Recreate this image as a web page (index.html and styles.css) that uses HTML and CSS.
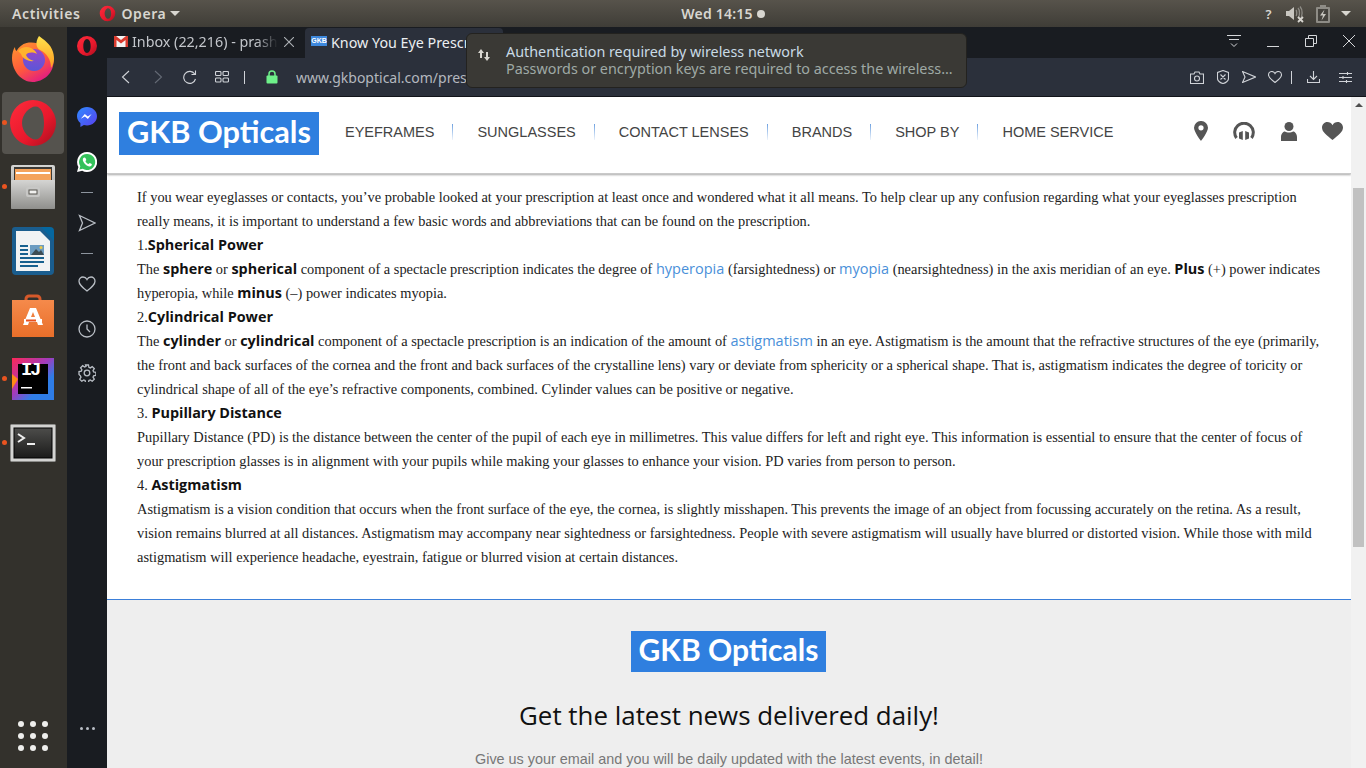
FILE: index.html
```html
<!DOCTYPE html>
<html lang="en">
<head>
  <meta charset="UTF-8">
  <title>Know You Eye Prescription</title>
  <link rel="stylesheet" href="styles.css">
</head>
<body>
  <svg class="defs" width="0" height="0">
    <defs>
      <linearGradient id="operaRed" x1="0" y1="0" x2="1" y2="1">
        <stop offset="0" stop-color="#ff2c3c"/>
        <stop offset="0.6" stop-color="#e8182c"/>
        <stop offset="1" stop-color="#a50f1e"/>
      </linearGradient>
      <linearGradient id="foxBody" x1="0" y1="0" x2="0.6" y2="1">
        <stop offset="0" stop-color="#ff9a2e"/>
        <stop offset="0.6" stop-color="#ff5a3c"/>
        <stop offset="1" stop-color="#e3207e"/>
      </linearGradient>
      <linearGradient id="foxFlame" x1="0" y1="0" x2="0" y2="1">
        <stop offset="0" stop-color="#ffe34d"/>
        <stop offset="1" stop-color="#ff9a1f"/>
      </linearGradient>
      <linearGradient id="foxCore" x1="0" y1="0" x2="0" y2="1">
        <stop offset="0" stop-color="#9a45c9"/>
        <stop offset="1" stop-color="#5a56d8"/>
      </linearGradient>
      <linearGradient id="shopBag" x1="0" y1="0" x2="0" y2="1">
        <stop offset="0" stop-color="#f58a4b"/>
        <stop offset="1" stop-color="#e96f2a"/>
      </linearGradient>
      <linearGradient id="ijBack" x1="0" y1="0" x2="1" y2="1">
        <stop offset="0" stop-color="#fe2857"/>
        <stop offset="0.45" stop-color="#a33bbd"/>
        <stop offset="0.7" stop-color="#2f7de6"/>
        <stop offset="1" stop-color="#2f7de6"/>
      </linearGradient>
      <linearGradient id="cabinet" x1="0" y1="0" x2="0" y2="1">
        <stop offset="0" stop-color="#d5d5d3"/>
        <stop offset="1" stop-color="#8f8f8c"/>
      </linearGradient>
      <linearGradient id="termGlass" x1="0" y1="0" x2="0" y2="1">
        <stop offset="0" stop-color="#4d4d4b"/>
        <stop offset="1" stop-color="#1b1b1a"/>
      </linearGradient>
      <linearGradient id="messenger" x1="0" y1="0" x2="1" y2="1">
        <stop offset="0" stop-color="#2e8bff"/>
        <stop offset="1" stop-color="#5a3ff0"/>
      </linearGradient>
    </defs>
  </svg>

  <header class="topbar">
    <div class="topbar-left">
      <span class="activities">Activities</span>
      <span class="app-menu">
        <svg class="app-menu-logo" viewBox="0 0 24 24"><path fill="url(#operaRed)" fill-rule="evenodd" d="M12 1a11 11 0 1 0 0 22 11 11 0 0 0 0-22zm1 3.500c2.600 0 4.200 3.400 4.200 7.500s-1.600 7.500-4.200 7.500S8 16 8 12s2.400-7.500 5-7.500z"/></svg>
        Opera
        <i class="caret"></i>
      </span>
    </div>
    <div class="clock">Wed 14:15 <i class="clock-dot"></i></div>
    <div class="tray">
      <span class="tray-help">?</span>
      <svg class="tray-icon" viewBox="0 0 20 18" width="20" height="18"><path fill="#c9c7c1" d="M1 6h3l5-4v13l-5-4H1z"/><path fill="none" stroke="#8e8c86" stroke-width="1.300" d="M11 5c1 1 1 5 0 6M13 3c2 2 2 8 0 10M15 1.500c2.800 3 2.800 10 0 13"/><path stroke="#d8d6d0" stroke-width="1.800" d="M13 12l5 5M18 12l-5 5"/></svg>
      <svg class="tray-icon" viewBox="0 0 14 18" width="14" height="18"><path fill="#8e8c86" d="M4 0h6v2h3a1 1 0 0 1 1 1v14a1 1 0 0 1-1 1H1a1 1 0 0 1-1-1V3a1 1 0 0 1 1-1h3z"/><path fill="#45433e" d="M2 4h10v12H2z"/><path fill="#c9c7c1" d="M8.500 4.500L4 10.500h3l-1.500 5 4.500-6.500H7z"/></svg>
      <i class="caret"></i>
    </div>
  </header>

  <div class="shell">
    <nav class="dock">
      <div class="dock-item">
        <svg viewBox="0 0 46 46" width="46" height="46">
          <path fill="url(#foxBody)" d="M2 22c0-5 1.500-9 3-11 0 2 .5 3 1.500 4 2-4 6-7 10-8 6-1 12 0 15 2 6 3 12 9 12 17 0 11-10 20-21 20S2 35 2 22z"/>
          <path fill="url(#foxFlame)" d="M29 0c4 3 12 8 14 16 2 7 1 12-2 16 0-8-4-15-11-18-4-2-5-8-1-14z"/>
          <circle cx="24" cy="24" r="11" fill="url(#foxCore)"/>
          <path fill="#ffb22e" d="M8 15c3-4 9-5 13-3 2 1 5 3 6 6-4-2-9-2-11 1 1 3 4 5 8 6-6 1-12-3-13-7-1-1-2-2-3-3z"/>
        </svg>
      </div>
      <div class="dock-item dock-active">
        <i class="run-dot"></i>
        <svg viewBox="0 0 46 46" width="46" height="46"><path fill="url(#operaRed)" fill-rule="evenodd" d="M23 0a23 23 0 1 0 0 46 23 23 0 0 0 0-46zm2.500 6.500c6 0 8.500 8 8.500 16.500s-2.500 16.500-8.500 16.500S12 31.500 12 23 19.500 6.500 25.500 6.500z"/></svg>
      </div>
      <div class="dock-item">
        <i class="run-dot"></i>
        <svg viewBox="0 0 46 46" width="46" height="46">
          <rect x="1" y="1" width="44" height="44" rx="2" fill="url(#cabinet)"/>
          <rect x="4" y="3" width="38" height="13" fill="#3c3a36"/>
          <rect x="5" y="5" width="36" height="11" fill="#f4a35c"/>
          <rect x="6" y="8" width="34" height="2" fill="#fff"/>
          <rect x="1" y="16" width="44" height="29" rx="1" fill="url(#cabinet)"/>
          <rect x="16" y="23" width="14" height="10" rx="2" fill="#c7c7c5"/>
          <rect x="19" y="26" width="8" height="4" fill="#f1f1ef" stroke="#56544f"/>
        </svg>
      </div>
      <div class="dock-item">
        <svg viewBox="0 0 42 48" width="42" height="48">
          <path fill="#1a5d8e" d="M3 0h27l12 12v32a4 4 0 0 1-4 4H4a4 4 0 0 1-4-4V3a3 3 0 0 1 3-3z"/>
          <path fill="#f1f3f4" d="M4 4h24l10 10v30H4z"/>
          <path fill="#06679f" d="M29 0h9a4 4 0 0 1 4 4v10z"/>
          <path fill="#18618f" d="M8 18h8v2H8zM8 22h8v2H8zM8 26h8v2H8zM8 30h24v2H8zM8 34h24v2H8zM8 38h18v2H8z"/>
          <rect x="18" y="18" width="14" height="10" fill="#6c9cc1"/>
          <path fill="#3d4d55" d="M19 28l5-6 3 3 2-2 3 5z"/>
          <circle cx="29" cy="20.500" r="1.500" fill="#ecc94b"/>
        </svg>
      </div>
      <div class="dock-item">
        <svg viewBox="0 0 42 44" width="42" height="44">
          <path fill="none" stroke="#d6592a" stroke-width="3" d="M14 12V6a3 3 0 0 1 3-3h8a3 3 0 0 1 3 3v6"/>
          <rect y="7" width="42" height="37" fill="url(#shopBag)"/>
          <path fill="#fff" d="M18 15h6l7 17h-5l-1-3h-8l-1 3h-5zM19 24h4l-2-5z"/>
          <rect x="12" y="26" width="18" height="3" fill="#fff"/>
          <rect x="14" y="26.500" width="10" height="2" fill="#e8501f"/>
        </svg>
      </div>
      <div class="dock-item">
        <i class="run-dot"></i>
        <svg viewBox="0 0 42 42" width="42" height="42">
          <rect width="42" height="42" fill="url(#ijBack)"/>
          <path fill="#ff8a18" d="M0 16l6 5-6 10z"/>
          <rect x="6" y="6" width="30" height="30" fill="#000"/>
          <rect x="9" y="29" width="11" height="1.500" fill="#fff"/>
        </svg>
        <span class="ij-mark">IJ</span>
      </div>
      <div class="dock-item">
        <i class="run-dot"></i>
        <svg viewBox="0 0 46 38" width="46" height="38">
          <rect x="0.500" y="0.500" width="45" height="37" rx="1" fill="#d3d3d1" stroke="#8c8c8a"/>
          <rect x="4" y="4" width="38" height="30" fill="url(#termGlass)" stroke="#000"/>
          <path fill="none" stroke="#eee" stroke-width="2" d="M8 10l6 4-6 4"/>
          <path stroke="#eee" stroke-width="2" d="M17 20h8"/>
        </svg>
      </div>
      <div class="dock-apps">
        <i></i><i></i><i></i><i></i><i></i><i></i><i></i><i></i><i></i>
      </div>
    </nav>

    <aside class="sidebar">
      <svg class="side-opera" viewBox="0 0 20 20" width="20" height="20"><path fill="url(#operaRed)" fill-rule="evenodd" d="M10 0a10 10 0 1 0 0 20 10 10 0 0 0 0-20zm0 3c2.200 0 3.700 3 3.700 7s-1.500 7-3.700 7-3.700-3-3.700-7 1.500-7 3.700-7z"/></svg>
      <svg class="side-messenger" viewBox="0 0 20 20" width="20" height="20"><path fill="url(#messenger)" d="M10 0C4.500 0 0 4 0 9.200c0 2.800 1.300 5.200 3.400 6.900V20l3.500-2c1 .3 2 .4 3.100.4 5.500 0 10-4 10-9.200S15.500 0 10 0z"/><path fill="#fff" d="M3.800 11.800l4-4.700 3 2.400 3.800-2.400-3.700 4.800-3-2.400z"/></svg>
      <svg class="side-whatsapp" viewBox="0 0 20 20" width="20" height="20"><path fill="#fff" d="M10 0a10 10 0 0 0-8.600 15L0 20l5.200-1.300A10 10 0 1 0 10 0z"/><path fill="#34c25b" d="M10 2a8 8 0 0 0-6.700 12.300l-.9 3.300 3.400-.9A8 8 0 1 0 10 2z"/><path fill="#fff" d="M7.300 5.600c-.5 0-1.500.8-1.500 2.200 0 2.400 3.700 6.600 6.800 6.600 1.400 0 2.300-1 2.300-1.800 0-.6-1.900-1.500-2.200-1.500-.4 0-.8 1-1.200 1-.8 0-3-2-3-2.900 0-.4.800-.8.800-1.200 0-.3-.7-2.400-2-2.400z"/></svg>
      <i class="side-rule side-rule-top"></i>
      <svg class="side-send side-line" viewBox="0 0 18 18" width="18" height="18"><path d="M1.500 1.500L17 9 1.500 16.500 4.500 9z"/></svg>
      <i class="side-rule side-rule-mid"></i>
      <svg class="side-heart side-line" viewBox="0 0 18 16" width="18" height="16"><path d="M9 15C4 11 1 8.500 1 5.200 1 2.800 2.800 1 5 1c1.700 0 3.200 1 4 2.500C9.800 2 11.300 1 13 1c2.200 0 4 1.800 4 4.200C17 8.500 14 11 9 15z"/></svg>
      <svg class="side-history side-line" viewBox="0 0 18 18" width="18" height="18"><circle cx="9" cy="9" r="8"/><path d="M9 4.500V9l3 3"/></svg>
      <svg class="side-gear side-line" viewBox="0 0 18 18" width="18" height="18"><circle cx="9" cy="9" r="2.800"/><path d="M7.500 1h3l.4 2.300 1.400.6 1.900-1.300 2.100 2.100-1.300 1.900.6 1.400 2.300.4v3l-2.300.4-.6 1.400 1.300 1.900-2.100 2.100-1.900-1.300-1.400.6-.4 2.300h-3l-.4-2.300-1.400-.6-1.900 1.300-2.100-2.100 1.300-1.900-.6-1.400L1 10.500v-3l2.300-.4.600-1.400-1.300-1.900 2.100-2.100 1.900 1.300 1.400-.6z"/></svg>
      <div class="side-more"><i></i><i></i><i></i></div>
    </aside>

    <div class="browser">
      <div class="tabstrip">
        <div class="tab">
          <svg class="favicon" viewBox="0 0 14 11" width="14" height="11"><rect width="14" height="11" fill="#f4f4f4"/><path fill="#d93a2e" d="M0 0h2l5 4 5-4h2v11h-2.500V4L7 7.500 2.500 4v7H0z"/></svg>
          <span class="tab-title tab-title-fade">Inbox (22,216) - prashant</span>
          <svg class="tab-close" viewBox="0 0 10 10" width="10" height="10"><path d="M0 0l10 10M10 0L0 10"/></svg>
        </div>
        <div class="tab tab-current">
          <span class="favicon-gkb">GKB</span>
          <span class="tab-title">Know You Eye Prescription</span>
        </div>
        <div class="window-controls">
          <svg class="win-line" viewBox="0 0 14 13" width="14" height="13"><path d="M0 .5h14M2 4.500h10M4 8.500l3 3 3-3"/></svg>
          <svg class="win-line" viewBox="0 0 12 12" width="12" height="12"><path d="M0 11.500h12"/></svg>
          <svg class="win-line" viewBox="0 0 12 12" width="12" height="12"><path d="M.5 3.500h8v8h-8zM3.500 3.500v-3h8v8h-3"/></svg>
          <svg class="win-line" viewBox="0 0 12 12" width="12" height="12"><path d="M0 0l12 12M12 0L0 12"/></svg>
        </div>
      </div>

      <div class="toolbar">
        <svg class="tool-line tool-back" viewBox="0 0 9 14" width="9" height="14"><path d="M8 1L1.500 7 8 13"/></svg>
        <svg class="tool-forward" viewBox="0 0 9 14" width="9" height="14"><path d="M1 1l6.500 6L1 13"/></svg>
        <svg class="tool-line tool-reload" viewBox="0 0 14 14" width="14" height="14"><path d="M12.500 9a6 6 0 1 1-.8-5M12.500 .5V4.500H8.500"/></svg>
        <svg class="tool-line tool-dial" viewBox="0 0 14 12" width="14" height="12"><rect x=".5" y=".5" width="5.500" height="4" rx="1"/><rect x="8" y=".5" width="5.500" height="4" rx="1"/><rect x=".5" y="7" width="5.500" height="4" rx="1"/><rect x="8" y="7" width="5.500" height="4" rx="1"/></svg>
        <i class="tool-sep"></i>
        <svg class="lock" viewBox="0 0 12 14" width="12" height="14"><path fill="none" stroke="#6ef08a" stroke-width="1.500" d="M3 6V4a3 3 0 0 1 6 0v2"/><rect y="5.500" width="11" height="8" x=".5" rx="1" fill="#6ef08a"/></svg>
        <span class="url">www.gkboptical.com/prescription</span>
        <div class="tool-right">
          <svg class="tool-line tool-camera" viewBox="0 0 14 13" width="14" height="13"><path d="M.5 3h3.500l1-2h4l1 2h3.500v9.500H.5z"/><circle cx="7" cy="7.500" r="2.500"/></svg>
          <svg class="tool-line tool-shield" viewBox="0 0 12 14" width="12" height="14"><path d="M6 .5l5.500 2v6c0 2.500-3 4.500-5.500 5-2.500-.5-5.500-2.500-5.500-5v-6zM3.500 4.500l5 5M8.500 4.500l-5 5"/></svg>
          <svg class="tool-line tool-send" viewBox="0 0 14 12" width="14" height="12"><path d="M.5 .5L13.500 6 .5 11.500 3 6z"/></svg>
          <svg class="tool-line tool-heart" viewBox="0 0 14 12" width="14" height="12"><path d="M7 11.500C3 8.500 .5 6.500 .5 4 .5 2 2 .5 3.800 .5 5.200 .5 6.400 1.300 7 2.500 7.600 1.300 8.800 .5 10.200 .5 12 .5 13.500 2 13.500 4c0 2.500-2.500 4.500-6.500 7.500z"/></svg>
          <i class="tool-sep tool-sep-right"></i>
          <svg class="tool-line tool-download" viewBox="0 0 13 12" width="13" height="12"><path d="M6.500 0v8M3 5l3.500 3.500L10 5M.5 8v3.500h12V8"/></svg>
          <svg class="tool-line" viewBox="0 0 13 11" width="13" height="11"><path d="M0 1.500h13M0 5.500h13M0 9.500h13"/><path d="M8.500 0v3M4 4v3M7.500 8v3"/></svg>
        </div>
      </div>

      <div class="viewport">
        <main class="page">
          <div class="site-header">
            <div class="logo">GKB Opticals</div>
            <ul class="site-nav">
              <li>EYEFRAMES</li>
              <li>SUNGLASSES</li>
              <li>CONTACT LENSES</li>
              <li>BRANDS</li>
              <li>SHOP BY</li>
              <li>HOME SERVICE</li>
            </ul>
            <div class="site-icons">
              <svg viewBox="0 0 14 20" width="14" height="20"><path fill-rule="evenodd" d="M7 0a6.800 6.800 0 0 0-7 6.800C0 11 7 20 7 20s7-9 7-13.200A6.800 6.800 0 0 0 7 0zm0 4.200a2.600 2.600 0 1 1 0 5.200 2.600 2.600 0 0 1 0-5.200z"/></svg>
              <svg viewBox="0 0 22 18" width="22" height="18"><path class="phones-arch" d="M3.500 16A9.300 9.300 0 1 1 18.500 16"/><path d="M6 10.500l3.800-1.500v9L6 16.500zM16 10.500L12.200 9v9l3.800-1.500z"/></svg>
              <svg viewBox="0 0 16 19" width="16" height="19"><circle cx="8" cy="4.500" r="4.500"/><path d="M0 19v-4c0-3.500 2.500-5.500 4-5.500 1 .7 2.500 1 4 1s3-.3 4-1c1.500 0 4 2 4 5.500v4z"/></svg>
              <svg viewBox="0 0 21 18" width="21" height="18"><path d="M10.500 18C4.500 13 0 10 0 5.500 0 2.500 2.300 0 5.300 0c2.200 0 4.200 1.200 5.200 3.200C11.500 1.200 13.500 0 15.700 0 18.700 0 21 2.500 21 5.500 21 10 16.500 13 10.500 18z"/></svg>
            </div>
          </div>

          <article class="article">
            <p>If you wear eyeglasses or contacts, you’ve probable looked at your prescription at least once and wondered what it all means. To help clear up any confusion regarding what your eyeglasses prescription really means, it is important to understand a few basic words and abbreviations that can be found on the prescription.</p>
            <p>1.<b>Spherical Power</b></p>
            <p>The <b>sphere</b> or <b>spherical</b> component of a spectacle prescription indicates the degree of <a>hyperopia</a> (farsightedness) or <a>myopia</a> (nearsightedness) in the axis meridian of an eye. <b>Plus</b> (+) power indicates hyperopia, while <b>minus</b> (–) power indicates myopia.</p>
            <p>2.<b>Cylindrical Power</b></p>
            <p>The <b>cylinder</b> or <b>cylindrical</b> component of a spectacle prescription is an indication of the amount of <a>astigmatism</a> in an eye. Astigmatism is the amount that the refractive structures of the eye (primarily, the front and back surfaces of the cornea and the front and back surfaces of the crystalline lens) vary or deviate from sphericity or a spherical shape. That is, astigmatism indicates the degree of toricity or cylindrical shape of all of the eye’s refractive components, combined. Cylinder values can be positive or negative.</p>
            <p>3. <b>Pupillary Distance</b></p>
            <p>Pupillary Distance (PD) is the distance between the center of the pupil of each eye in millimetres. This value differs for left and right eye. This information is essential to ensure that the center of focus of your prescription glasses is in alignment with your pupils while making your glasses to enhance your vision. PD varies from person to person.</p>
            <p>4. <b>Astigmatism</b></p>
            <p>Astigmatism is a vision condition that occurs when the front surface of the eye, the cornea, is slightly misshapen. This prevents the image of an object from focussing accurately on the retina. As a result, vision remains blurred at all distances. Astigmatism may accompany near sightedness or farsightedness. People with severe astigmatism will usually have blurred or distorted vision. While those with mild astigmatism will experience headache, eyestrain, fatigue or blurred vision at certain distances.</p>
          </article>

          <section class="newsletter">
            <div class="logo logo-small">GKB Opticals</div>
            <h2>Get the latest news delivered daily!</h2>
            <p>Give us your email and you will be daily updated with the latest events, in detail!</p>
          </section>
        </main>
        <div class="scrollbar">
          <i class="scroll-up"></i>
          <div class="scroll-thumb"></div>
        </div>
      </div>
    </div>
  </div>

  <div class="notice">
    <svg class="notice-icon" viewBox="0 0 12 12" width="12" height="12"><path fill="#d8d6d0" d="M3 0l3 4H4v5H2V4H0zM9 12L6 8h2V3h2v5h2z"/></svg>
    <div>
      <div class="notice-title">Authentication required by wireless network</div>
      <div class="notice-body">Passwords or encryption keys are required to access the wireless…</div>
    </div>
  </div>
</body>
</html>
```

FILE: styles.css
```css
* {
  box-sizing: border-box;
}

html, body {
  margin: 0;
  height: 768px;
  overflow: hidden;
}

body {
  position: relative;
  display: flex;
  flex-direction: column;
  font-family: "Liberation Serif", serif;
  background: #33312c;
}

.defs {
  position: absolute;
}

i {
  display: block;
}

/* desktop top bar */
.topbar {
  height: 27px;
  flex: none;
  display: grid;
  grid-template-columns: 1fr auto 1fr;
  align-items: center;
  padding: 0 12px;
  background: linear-gradient(#57534b, #3f3d37);
  color: #d8d6d0;
  font-family: "Noto Sans", sans-serif;
  font-size: 14px;
  font-weight: 600;
  letter-spacing: 0.6px;
}

.topbar-left {
  display: flex;
  align-items: center;
  gap: 19px;
}

.app-menu {
  display: flex;
  align-items: center;
  gap: 5px;
}

.app-menu-logo {
  width: 17px;
  height: 17px;
}

.caret {
  width: 0;
  height: 0;
  border-left: 5px solid transparent;
  border-right: 5px solid transparent;
  border-top: 5px solid #d8d6d0;
}

.app-menu .caret {
  margin-left: -1px;
}

.clock {
  display: flex;
  align-items: center;
  gap: 4px;
  margin-left: 80px;
  letter-spacing: 0.2px;
}

.clock-dot {
  width: 8px;
  height: 8px;
  border-radius: 50%;
  background: #d8d6d0;
}

.tray {
  display: flex;
  align-items: center;
  justify-content: flex-end;
  gap: 11px;
  margin-right: 3px;
}

.tray-help {
  font-size: 13px;
  margin-right: 2px;
}

/* dock */
.shell {
  flex: 1;
  min-height: 0;
  display: flex;
}

.dock {
  width: 67px;
  flex: none;
  display: flex;
  flex-direction: column;
  background: #33312c;
}

.dock-item {
  position: relative;
  height: 64px;
  flex: none;
  display: flex;
  align-items: center;
  justify-content: center;
  margin: 0 3px 0 2px;
}

.dock-active {
  background: #55534e;
  border-radius: 4px;
  height: 62px;
  margin-top: 1px;
  margin-bottom: 1px;
}

.run-dot {
  position: absolute;
  left: 0;
  top: 50%;
  margin: -3px 0 0 0;
  width: 5px;
  height: 5px;
  border-radius: 50%;
  background: #e95420;
}

.ij-mark {
  position: absolute;
  left: 19px;
  top: 12px;
  color: #fff;
  font: 700 19px "Liberation Mono", monospace;
  letter-spacing: -2.500px;
}

.dock-apps {
  display: grid;
  grid-template-columns: repeat(3, 6px);
  gap: 6px;
  margin: auto 0 17px 18px;
}

.dock-apps i {
  width: 6px;
  height: 6px;
  border-radius: 50%;
  background: #eeeeec;
}

/* opera sidebar */
.sidebar {
  width: 40px;
  flex: none;
  display: flex;
  flex-direction: column;
  align-items: center;
  background: #191c21;
}

.side-opera {
  margin-top: 9px;
}

.side-messenger {
  margin-top: 51px;
}

.side-whatsapp {
  margin-top: 25px;
}

.side-rule {
  width: 12px;
  height: 1px;
  background: #8d949e;
}

.side-rule-top {
  margin-top: 20px;
}

.side-send {
  margin-top: 21px;
}

.side-rule-mid {
  margin-top: 21px;
}

.side-heart {
  margin-top: 22px;
}

.side-history {
  margin-top: 28px;
}

.side-gear {
  margin-top: 26px;
}

.side-line {
  fill: none;
  stroke: #b9bec5;
  stroke-width: 1.3;
}

.side-more {
  display: flex;
  gap: 3px;
  margin-top: auto;
  margin-bottom: 38px;
}

.side-more i {
  width: 3px;
  height: 3px;
  border-radius: 50%;
  background: #b9bec5;
}

/* browser chrome */
.browser {
  flex: 1;
  min-width: 0;
  display: flex;
  flex-direction: column;
}

.tabstrip {
  height: 31px;
  flex: none;
  display: flex;
  background: #191c21;
  color: #c3c6cb;
  font-family: "Noto Sans", sans-serif;
  font-size: 14.300px;
}

.tab {
  width: 198px;
  display: flex;
  align-items: center;
  padding: 0 0 2px 7px;
  gap: 4px;
}

.tab-current {
  background: #2b303b;
  color: #eceef1;
  padding-left: 6px;
  border-radius: 4px 4px 0 0;
  margin-top: 1px;
}

.favicon {
  flex: none;
}

.favicon-gkb {
  flex: none;
  width: 16px;
  height: 10px;
  margin-top: -3px;
  background: #3d88dd;
  color: #fff;
  font: 700 7px/10px "Liberation Sans", sans-serif;
  text-align: center;
}

.tab-title {
  white-space: nowrap;
  overflow: hidden;
  flex: 1;
}

.tab-title-fade {
  flex: none;
  width: 146px;
  -webkit-mask-image: linear-gradient(90deg, #000 85%, transparent);
  mask-image: linear-gradient(90deg, #000 85%, transparent);
}

.tab-close {
  flex: none;
  margin-left: 2px;
  fill: none;
  stroke: #aeb1b6;
  stroke-width: 1.100;
}

.window-controls {
  margin-left: auto;
  display: flex;
  align-items: center;
  gap: 26px;
  padding: 0 11px 3px 0;
}

.win-line {
  fill: none;
  stroke: #d5d7da;
  stroke-width: 1;
}

.toolbar {
  height: 39px;
  flex: none;
  display: flex;
  align-items: center;
  padding-left: 13.500px;
  background: #2b303b;
  border-bottom: 1px solid #12141a;
  color: #b4b8bf;
  font-family: "Noto Sans", sans-serif;
  font-size: 14px;
}

.tool-line {
  flex: none;
  fill: none;
  stroke: #d0d3d8;
  stroke-width: 1.100;
}

.tool-back {
  margin-right: 24px;
}

.tool-forward {
  flex: none;
  fill: none;
  stroke: #646a75;
  stroke-width: 1.100;
  margin-right: 20.500px;
}

.tool-reload {
  margin-right: 18px;
}

.tool-dial {
  margin-right: 15px;
}

.tool-sep {
  flex: none;
  width: 1px;
  height: 13px;
  background: #d0d3d8;
}

.lock {
  flex: none;
  margin: 0 18px 0 21px;
}

.url {
  width: 172px;
  overflow: hidden;
  white-space: nowrap;
}

.tool-right {
  margin-left: auto;
  display: flex;
  align-items: center;
  padding-right: 14.500px;
}

.tool-camera {
  margin-right: 13px;
}

.tool-shield {
  margin-right: 13px;
}

.tool-send {
  margin-right: 12px;
}

.tool-heart {
  margin-right: 9px;
}

.tool-sep-right {
  margin-right: 14.500px;
}

.tool-download {
  margin-right: 19px;
}

/* page */
.viewport {
  flex: 1;
  min-height: 0;
  display: flex;
  background: #fff;
}

.page {
  flex: 1;
  min-width: 0;
  overflow: hidden;
  display: flex;
  flex-direction: column;
}

.site-header {
  height: 77px;
  flex: none;
  display: flex;
  align-items: center;
  padding: 0 8px 3px 12px;
  border-bottom: 1px solid #c9c9c9;
  box-shadow: 0 1px 2px rgba(0, 0, 0, 0.35);
  position: relative;
}

.logo {
  width: 200px;
  height: 43px;
  flex: none;
  background: #2f7fdf;
  color: #fff;
  font: 700 30.700px/40px "Lato", sans-serif;
  text-align: center;
}

.site-nav {
  display: flex;
  margin: 0 0 4px 26px;
  padding: 0;
  list-style: none;
  color: #444;
  font: 14.500px "Liberation Sans", sans-serif;
}

.site-nav li {
  padding-right: 19px;
  margin-right: 24px;
  background: linear-gradient(#5e97dd, rgba(94, 151, 221, 0)) right center / 1px 20px no-repeat;
}

.site-nav li:last-child {
  background: none;
}

.site-icons {
  margin: 0 0 5px auto;
  display: flex;
  align-items: center;
  gap: 25.500px;
  fill: #555;
}

.phones-arch {
  fill: none;
  stroke: #555;
  stroke-width: 3;
}

.article {
  padding: 11px 30px 30px;
  flex: none;
  color: #222;
  font-size: 14.400px;
  line-height: 24px;
}

.article p {
  margin: 0;
}

.article b {
  font-family: "Open Sans", sans-serif;
  font-size: 14.400px;
  font-weight: 700;
  color: #111;
}

.article a {
  font-family: "Open Sans", sans-serif;
  font-size: 14.500px;
  color: #4a90d9;
}

.newsletter {
  flex: 1;
  display: flex;
  flex-direction: column;
  align-items: center;
  background: #eee;
  border-top: 1px solid #3b7fd9;
  padding-top: 31px;
}

.logo-small {
  width: 195px;
  height: 41px;
  margin-right: 1px;
  font-size: 30px;
  line-height: 37px;
}

.newsletter h2 {
  margin: 25px 0 0;
  color: #111;
  font: 400 25.900px/36px "Open Sans", sans-serif;
}

.newsletter p {
  margin: 16px 0 0;
  color: #777;
  font: 14.400px/20px "Liberation Sans", sans-serif;
}

.scrollbar {
  width: 15px;
  flex: none;
  background: #f1f1f1;
  display: flex;
  flex-direction: column;
  align-items: center;
}

.scroll-up {
  flex: none;
  width: 0;
  height: 0;
  margin-top: 6px;
  border-left: 4px solid transparent;
  border-right: 4px solid transparent;
  border-bottom: 4px solid #505050;
}

.scroll-thumb {
  flex: none;
  width: 11px;
  height: 359px;
  margin-top: 81px;
  background: #c1c1c1;
}

/* notification over the browser */
.notice {
  position: absolute;
  left: 466px;
  top: 33px;
  width: 501px;
  height: 55px;
  display: flex;
  align-items: center;
  gap: 16px;
  padding: 0 0 2px 11px;
  background: #3a3935;
  border: 1px solid #23221f;
  border-radius: 6px;
  font-family: "Noto Sans", sans-serif;
  font-size: 14.350px;
  line-height: 17px;
}

.notice-icon {
  margin-top: -10px;
}

.notice-title {
  color: #c9dbe6;
}

.notice-body {
  color: #9fa9a5;
}
```
